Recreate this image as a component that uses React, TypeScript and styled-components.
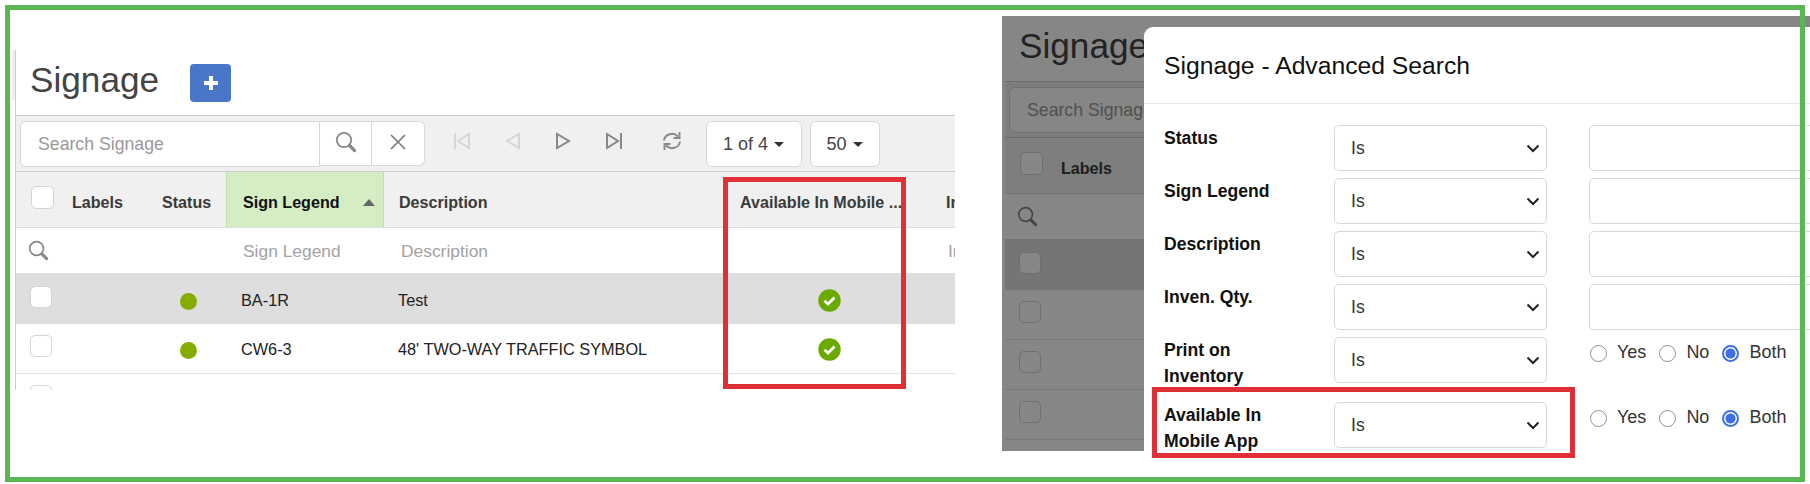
import React from "react";
import styled, { createGlobalStyle } from "styled-components";

const Global = createGlobalStyle`
  html, body { margin: 0; padding: 0; background: #fff; overflow: hidden; }
  * { box-sizing: border-box; }
  body { font-family: "Liberation Sans", Arial, sans-serif; }
`;

const Page = styled.div`
  position: relative;
  display: flex;
  align-items: flex-start;
  width: 1810px;
  height: 484px;
  overflow: hidden;
  background: #fff;
`;

const Frame = styled.div`
  position: absolute;
  top: 5px;
  left: 5px;
  width: 1800px;
  height: 477px;
  border: 5px solid #5cb553;
  pointer-events: none;
  z-index: 5;
`;

const Highlight = styled.div<{ $l: number; $t: number; $w: number; $h: number }>`
  position: absolute;
  left: ${(p) => p.$l}px;
  top: ${(p) => p.$t}px;
  width: ${(p) => p.$w}px;
  height: ${(p) => p.$h}px;
  border: 5px solid #e02f37;
  pointer-events: none;
  z-index: 3;
`;

const LeftPanel = styled.section`
  position: relative;
  flex: none;
  width: 940px;
  height: 340px;
  margin: 50px 0 0 15px;
  border-left: 1px solid #ccc;
  &::before {
    content: "";
    position: absolute;
    left: -4px;
    top: 0;
    width: 3px;
    height: 50px;
    background: #eeeeee;
  }
`;

const ListClip = styled.div`
  height: 100%;
  overflow: hidden;
`;

const RightPanel = styled.section`
  position: relative;
  flex: none;
  width: 808px;
  height: 468px;
  margin: 16px 0 0 47px;
`;

const DimLayer = styled.div`
  position: relative;
  width: 100%;
  height: 435px;
  overflow: hidden;
  padding-left: 3px;
  background: #fff;
  &::after {
    content: "";
    position: absolute;
    inset: 0;
    background: rgba(0, 0, 0, 0.475);
  }
`;

const TitleRow = styled.div`
  display: flex;
  align-items: flex-start;
  height: 65px;
  padding: 14px 0 0 14px;
  background: #fff;
`;

const Title = styled.h1`
  margin: 0;
  font-size: 35.2px;
  line-height: 32px;
  font-weight: 400;
  color: #444;
`;

const AddButton = styled.button`
  display: flex;
  align-items: center;
  justify-content: center;
  width: 41px;
  height: 38px;
  margin-left: 31px;
  padding: 0;
  border: 0;
  border-radius: 4px;
  background: #4a76c8;
`;

const Toolbar = styled.div`
  display: flex;
  align-items: center;
  height: 57px;
  padding-left: 4px;
  background: #f0f0f0;
  border-top: 1px solid #ccc;
  border-bottom: 1px solid #ccc;
`;

const SearchInput = styled.input`
  width: 300px;
  height: 46px;
  padding: 2px 17px 0;
  border: 1px solid #d8d8d8;
  border-radius: 6px 0 0 6px;
  background: #fff;
  font: 400 17.7px "Liberation Sans", Arial, sans-serif;
  outline: none;
  &::placeholder { color: #999; opacity: 1; }
`;

const AddonButton = styled.button<{ $last?: boolean }>`
  display: flex;
  align-items: center;
  justify-content: center;
  width: ${(p) => (p.$last ? 53 : 52)}px;
  height: 45px;
  padding: 0 0 4px;
  background: #fff;
  border: 1px solid #d8d8d8;
  border-left: 0;
  border-radius: ${(p) => (p.$last ? "0 6px 6px 0" : "0")};
`;

const PagerButton = styled.button<{ $ml?: number }>`
  display: flex;
  align-items: center;
  justify-content: center;
  width: 50.5px;
  height: 45px;
  margin-left: ${(p) => p.$ml ?? 0}px;
  padding: 0 0 5px;
  border: 0;
  background: transparent;
`;

const DropButton = styled.button<{ $w: number; $ml: number }>`
  display: flex;
  align-items: center;
  justify-content: center;
  gap: 6px;
  width: ${(p) => p.$w}px;
  height: 46px;
  margin-left: ${(p) => p.$ml}px;
  padding: 1px 0 0;
  background: #fff;
  border: 1px solid #d8d8d8;
  border-radius: 6px;
  color: #444;
  font: 400 18px "Liberation Sans", Arial, sans-serif;
`;

const Caret = styled.span`
  width: 0;
  height: 0;
  border-left: 5px solid transparent;
  border-right: 5px solid transparent;
  border-top: 5px solid #333;
`;

const COLS = "41px 90px 79px 158px 344px 203px 1fr";

const HeadRow = styled.div`
  display: grid;
  grid-template-columns: ${COLS};
  height: 56px;
  background: #f0f0f0;
  border-bottom: 1px solid #ddd;
`;

const HeadCell = styled.div<{ $sorted?: boolean; $pad?: number }>`
  display: flex;
  align-items: center;
  justify-content: space-between;
  padding: 6px 9px 0 ${(p) => p.$pad ?? (p.$sorted ? 17 : 15)}px;
  white-space: nowrap;
  font-size: 16.1px;
  font-weight: 700;
  color: ${(p) => (p.$sorted ? "#111" : "#3a3a3a")};
  background: ${(p) => (p.$sorted ? "#d4edc4" : "transparent")};
  box-shadow: ${(p) => (p.$sorted ? "inset 1px 0 #bfdcae, inset -1px 0 #bfdcae" : "none")};
`;

const SortArrow = styled.span`
  width: 0;
  height: 0;
  border-left: 6.5px solid transparent;
  border-right: 6.5px solid transparent;
  border-bottom: 7px solid #666;
`;

const Box = styled.span<{ $size: number; $ml: number; $mt: number }>`
  display: block;
  width: ${(p) => p.$size}px;
  height: ${(p) => p.$size}px;
  margin: ${(p) => p.$mt}px 0 0 ${(p) => p.$ml}px;
  border: 1px solid #d4d4d4;
  border-radius: 5px;
  background: #fff;
`;

const FilterRow = styled.div`
  display: grid;
  grid-template-columns: ${COLS};
  height: 46px;
  background: #fff;
  border-bottom: 1px solid #ddd;
`;

const FilterCell = styled.div`
  display: flex;
  align-items: center;
  padding-left: 17px;
  padding-top: 1px;
  white-space: nowrap;
  font-size: 17.4px;
  color: #a2a2a2;
`;

const FilterIcon = styled.div`
  padding: 12px 0 0 12px;
`;

const BodyRow = styled.div<{ $selected?: boolean }>`
  display: grid;
  grid-template-columns: ${COLS};
  height: 50px;
  background: ${(p) => (p.$selected ? "#dedede" : "#fff")};
  border-bottom: ${(p) => (p.$selected ? "0" : "1px solid #e4e4e4")};
  &:first-of-type { height: 51px; }
`;

const BodyCell = styled.div<{ $center?: boolean; $pad?: number }>`
  display: flex;
  align-items: center;
  justify-content: ${(p) => (p.$center ? "center" : "flex-start")};
  padding-left: ${(p) => (p.$center ? 0 : p.$pad ?? 14)}px;
  padding-top: 2px;
  white-space: nowrap;
  font-size: 16.3px;
  color: #222;
`;

const Dot = styled.span`
  width: 17px;
  height: 17px;
  margin: 2px 0 0 19px;
  border-radius: 50%;
  background: #84ad00;
`;

const Modal = styled.div`
  position: absolute;
  left: 142px;
  top: 11px;
  width: 720px;
  height: 480px;
  background: #fff;
  border-top-left-radius: 9px;
  z-index: 2;
`;

const ModalHead = styled.div`
  display: flex;
  align-items: center;
  height: 77px;
  padding: 2px 0 0 20px;
  border-bottom: 1px solid #e6e6e6;
`;

const ModalTitle = styled.h2`
  margin: 0;
  font-size: 24.7px;
  font-weight: 400;
  color: #111;
`;

const ModalBody = styled.div`
  display: flex;
  flex-direction: column;
  gap: 7px;
  padding: 21px 0 0 20px;
`;

const FormRow = styled.div<{ $spaced?: boolean }>`
  position: relative;
  display: grid;
  grid-template-columns: 170px 213px 42px 1fr;
  height: 46px;
  margin-top: ${(p) => (p.$spaced ? 12 : 0)}px;
`;

const FormLabel = styled.label`
  max-width: 140px;
  padding-top: 1px;
  font-size: 17.6px;
  line-height: 25.7px;
  font-weight: 700;
  color: #111;
`;

const SelectBox = styled.div`
  display: flex;
  align-items: center;
  justify-content: space-between;
  height: 46px;
  padding: 0 6px 0 16px;
  border: 1.5px solid #d8d8d8;
  border-radius: 5px;
  background: #fff;
  font-size: 17.6px;
  color: #333;
`;

const TextField = styled.input`
  grid-column: 4;
  height: 46px;
  border: 1.5px solid #d8d8d8;
  border-radius: 5px;
  background: #fff;
`;

const Radios = styled.div`
  grid-column: 4;
  display: flex;
  align-items: center;
  height: 30px;
  font-size: 18px;
  color: #333;
`;

const RadioInput = styled.input<{ $ml: number }>`
  appearance: none;
  width: 17px;
  height: 17px;
  margin: 2px 10px 0 ${(p) => p.$ml}px;
  border: 1.5px solid #8f8f8f;
  border-radius: 50%;
  background: #fff;
  &:checked {
    border: 2px solid #3f6fe4;
    background: radial-gradient(circle, #3f6fe4 0 4.8px, #fff 5.3px);
  }
`;

const Chevron = () => (
  <svg width="14" height="14" viewBox="0 0 14 14" fill="none">
    <path d="M1.5 4.5 7 10 12.5 4.5" stroke="#222" strokeWidth="2" />
  </svg>
);

const SearchIcon = ({ c = "#888", s = 22 }: { c?: string; s?: number }) => (
  <svg width={s} height={s} viewBox="0 0 22 22" fill="none">
    <circle cx="9" cy="9" r="7.2" stroke={c} strokeWidth="1.8" />
    <path d="M14.5 14.5 19.5 19.5" stroke={c} strokeWidth="3.2" strokeLinecap="round" />
  </svg>
);

const CloseIcon = () => (
  <svg width="18" height="18" viewBox="0 0 18 18" fill="none">
    <path d="M2 2 16 16M16 2 2 16" stroke="#777" strokeWidth="1.6" />
  </svg>
);

const PlusIcon = () => (
  <svg width="16" height="16" viewBox="0 0 16 16" fill="none">
    <path d="M8 1v14M1 8h14" stroke="#fff" strokeWidth="4" />
  </svg>
);

const SkipIcon = ({ dir, c }: { dir: "first" | "last"; c: string }) => (
  <svg width="18" height="20" viewBox="0 0 18 20" fill="none" stroke={c} strokeWidth="2">
    {dir === "first" ? (
      <>
        <path d="M2 2v16" />
        <path d="M16 3v14L5 10z" />
      </>
    ) : (
      <>
        <path d="M16 2v16" />
        <path d="M2 3v14l11-7z" />
      </>
    )}
  </svg>
);

const StepIcon = ({ dir, c }: { dir: "prev" | "next"; c: string }) => (
  <svg width="16" height="20" viewBox="0 0 16 20" fill="none" stroke={c} strokeWidth="2">
    {dir === "prev" ? <path d="M14 3v14L2 10z" /> : <path d="M2 3v14l12-7z" />}
  </svg>
);

const RefreshIcon = () => (
  <svg width="20" height="20" viewBox="0 0 20 20" fill="none" stroke="#888" strokeWidth="1.9">
    <path d="M2 9.5A8 7.5 0 0 1 16 5.5" />
    <path d="M18 10.5A8 7.5 0 0 1 4 14.5" />
    <path d="M17.5 1v6h-6" />
    <path d="M2.5 19v-6h6" />
  </svg>
);

const OkIcon = () => (
  <svg width="23" height="23" viewBox="0 0 23 23">
    <circle cx="11.5" cy="11.5" r="11.2" fill="#6aaa00" />
    <path d="M6.5 11.8 10 15 16.5 8.5" fill="none" stroke="#fff" strokeWidth="2.8" />
  </svg>
);

const ROWS = [
  { legend: "BA-1R", description: "Test", selected: true },
  { legend: "CW6-3", description: "48' TWO-WAY TRAFFIC SYMBOL" },
  { legend: "", description: "" },
  { legend: "", description: "" },
];

const SignageList = () => (
  <>
    <TitleRow>
      <Title>Signage</Title>
      <AddButton>
        <PlusIcon />
      </AddButton>
    </TitleRow>
    <Toolbar>
      <SearchInput placeholder="Search Signage" readOnly />
      <AddonButton>
        <SearchIcon />
      </AddonButton>
      <AddonButton $last>
        <CloseIcon />
      </AddonButton>
      <PagerButton $ml={12}>
        <SkipIcon dir="first" c="#d6d6d6" />
      </PagerButton>
      <PagerButton>
        <StepIcon dir="prev" c="#d6d6d6" />
      </PagerButton>
      <PagerButton>
        <StepIcon dir="next" c="#888" />
      </PagerButton>
      <PagerButton>
        <SkipIcon dir="last" c="#888" />
      </PagerButton>
      <PagerButton $ml={8}>
        <RefreshIcon />
      </PagerButton>
      <DropButton $w={96} $ml={8}>
        1 of 4 <Caret />
      </DropButton>
      <DropButton $w={70} $ml={8}>
        50 <Caret />
      </DropButton>
    </Toolbar>
    <HeadRow>
      <div>
        <Box $size={23} $ml={15} $mt={14} />
      </div>
      <HeadCell>Labels</HeadCell>
      <HeadCell>Status</HeadCell>
      <HeadCell $sorted>
        Sign Legend <SortArrow />
      </HeadCell>
      <HeadCell>Description</HeadCell>
      <HeadCell $pad={12}>Available In Mobile ...</HeadCell>
      <HeadCell>Inven. Qty.</HeadCell>
    </HeadRow>
    <FilterRow>
      <FilterIcon>
        <SearchIcon s={21} />
      </FilterIcon>
      <div />
      <div />
      <FilterCell>Sign Legend</FilterCell>
      <FilterCell>Description</FilterCell>
      <div />
      <FilterCell>Inven. Qty.</FilterCell>
    </FilterRow>
    {ROWS.map((r, i) => (
      <BodyRow key={i} $selected={r.selected}>
        <div>
          <Box $size={22} $ml={14} $mt={i === 0 ? 12 : 11} />
        </div>
        <div />
        {r.legend ? (
          <BodyCell>
            <Dot />
          </BodyCell>
        ) : (
          <div />
        )}
        <BodyCell $pad={15}>{r.legend}</BodyCell>
        <BodyCell>{r.description}</BodyCell>
        <BodyCell $center>{r.legend ? <OkIcon /> : null}</BodyCell>
        <div />
      </BodyRow>
    ))}
  </>
);

const FIELDS: { label: string; kind: "text" | "radio" }[] = [
  { label: "Status", kind: "text" },
  { label: "Sign Legend", kind: "text" },
  { label: "Description", kind: "text" },
  { label: "Inven. Qty.", kind: "text" },
  { label: "Print on Inventory", kind: "radio" },
  { label: "Available In Mobile App", kind: "radio" },
];

const RadioSet = ({ name }: { name: string }) => (
  <Radios>
    <RadioInput type="radio" name={name} $ml={1} readOnly />
    Yes
    <RadioInput type="radio" name={name} $ml={13} readOnly />
    No
    <RadioInput type="radio" name={name} $ml={13} defaultChecked />
    Both
  </Radios>
);

export default function App() {
  return (
    <Page>
      <Global />
      <Frame />
      <LeftPanel>
        <ListClip>
          <SignageList />
        </ListClip>
        <Highlight $l={707} $t={127} $w={183} $h={212} />
      </LeftPanel>
      <RightPanel>
        <DimLayer>
          <SignageList />
        </DimLayer>
        <Modal>
          <ModalHead>
            <ModalTitle>Signage - Advanced Search</ModalTitle>
          </ModalHead>
          <ModalBody>
            {FIELDS.map((f, i) => (
              <FormRow key={f.label} $spaced={i === 5}>
                <FormLabel>{f.label}</FormLabel>
                <SelectBox>
                  Is <Chevron />
                </SelectBox>
                {f.kind === "text" ? <TextField readOnly /> : <RadioSet name={f.label} />}
                {i === 5 ? <Highlight $l={-12} $t={-15} $w={423} $h={71} /> : null}
              </FormRow>
            ))}
          </ModalBody>
        </Modal>
      </RightPanel>
    </Page>
  );
}
